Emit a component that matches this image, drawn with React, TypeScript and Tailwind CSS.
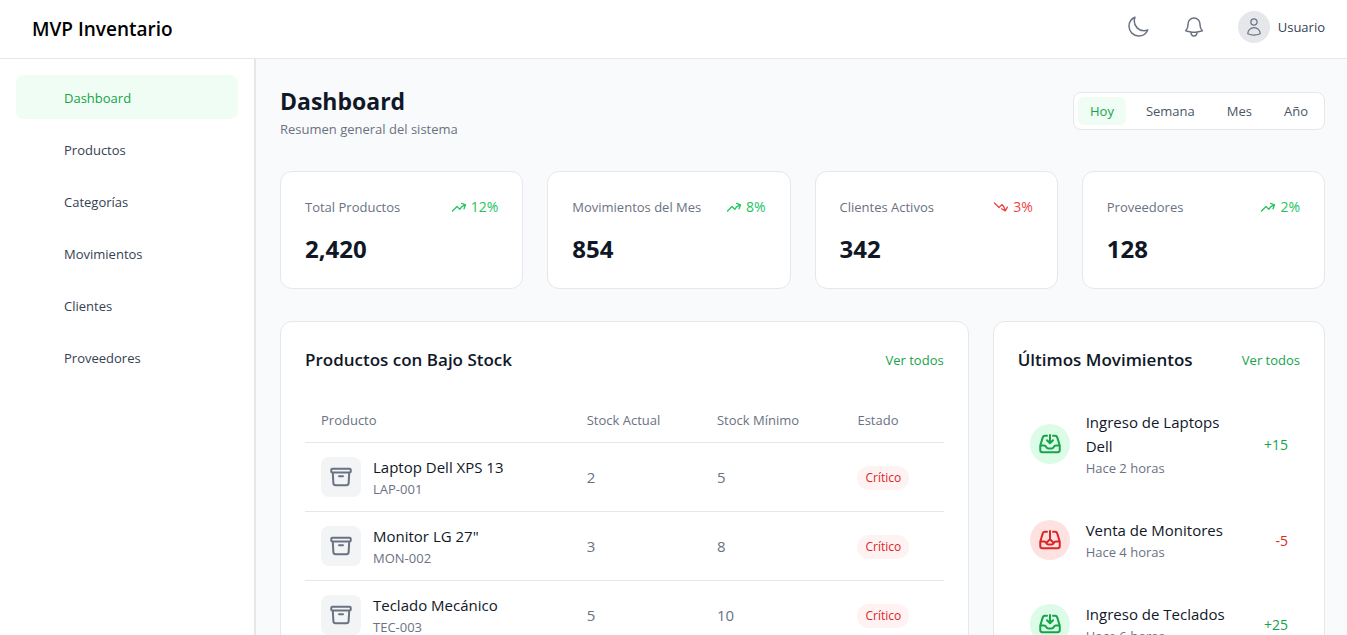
import { useState } from "react";
import {
  HiOutlineMoon,
  HiOutlineBell,
  HiOutlineUser,
} from "react-icons/hi2";

const NAV = ["Dashboard", "Productos", "Categorías", "Movimientos", "Clientes", "Proveedores"];
const RANGES = ["Hoy", "Semana", "Mes", "Año"];

const STATS = [
  { label: "Total Productos", value: "2,420", change: "12%", up: true },
  { label: "Movimientos del Mes", value: "854", change: "8%", up: true },
  { label: "Clientes Activos", value: "342", change: "3%", up: false },
  { label: "Proveedores", value: "128", change: "2%", up: true },
];

const LOW_STOCK = [
  { name: "Laptop Dell XPS 13", code: "LAP-001", stock: 2, min: 5 },
  { name: 'Monitor LG 27"', code: "MON-002", stock: 3, min: 8 },
  { name: "Teclado Mecánico", code: "TEC-003", stock: 5, min: 10 },
];

const MOVEMENTS = [
  { title: "Ingreso de Laptops Dell", time: "Hace 2 horas", amount: "+15", incoming: true },
  { title: "Venta de Monitores", time: "Hace 4 horas", amount: "-5", incoming: false },
  { title: "Ingreso de Teclados", time: "Hace 6 horas", amount: "+25", incoming: true },
];

const TRAY =
  "M9 3.75H6.912a2.25 2.25 0 00-2.15 1.588L2.35 13.177a2.25 2.25 0 00-.1.661V18a2.25 2.25 0 002.25 2.25h15A2.25 2.25 0 0021.75 18v-4.162c0-.224-.034-.447-.1-.661L19.24 5.338a2.25 2.25 0 00-2.15-1.588H15M2.25 13.5h3.86a2.25 2.25 0 012.012 1.244l.256.512a2.25 2.25 0 002.013 1.244h3.218a2.25 2.25 0 002.013-1.244l.256-.512a2.25 2.25 0 012.013-1.244h3.859";
const TRAY_IN = TRAY + "M12 3v8.25m0 0l-3-3m3 3l3-3";
const TRAY_OUT = TRAY + "M12 3v8.25m0 0l-3 3m3-3l3 3";
const TREND_UP =
  "M2.25 18L9 11.25l4.306 4.307a11.95 11.95 0 015.814-5.519l2.74-1.22m0 0l-5.94-2.28m5.94 2.28l-2.28 5.941";
const TREND_DOWN =
  "M2.25 6L9 12.75l4.286-4.286a11.948 11.948 0 014.306 6.43l.776 2.898m0 0l3.182-5.511m-3.182 5.51l-5.511-3.181";
const ARCHIVE =
  "M20.25 7.5l-.625 10.632a2.25 2.25 0 01-2.247 2.118H6.622a2.25 2.25 0 01-2.247-2.118L3.75 7.5M10 11.25h4M3.375 7.5h17.25c.621 0 1.125-.504 1.125-1.125v-1.5c0-.621-.504-1.125-1.125-1.125H3.375c-.621 0-1.125.504-1.125 1.125v1.5c0 .621.504 1.125 1.125 1.125z";

function Icon({ d, className }: { d: string; className: string }) {
  return (
    <svg
      aria-hidden="true"
      viewBox="0 0 24 24"
      fill="none"
      stroke="currentColor"
      strokeWidth={2}
      strokeLinecap="round"
      strokeLinejoin="round"
      className={className}
    >
      <path d={d} />
    </svg>
  );
}

function Header() {
  return (
    <header className="flex h-[59px] shrink-0 items-center justify-between border-b border-gray-200 bg-white pr-[22px] pb-1 pl-8">
      <span className="pt-1 text-[19px] font-semibold text-black">MVP Inventario</span>
      <div className="flex items-center gap-8 text-gray-500">
        <button type="button" aria-label="Cambiar tema">
          <HiOutlineMoon className="size-6" />
        </button>
        <button type="button" aria-label="Notificaciones">
          <HiOutlineBell className="size-6" />
        </button>
        <button type="button" className="flex items-center gap-2">
          <span className="flex size-8 items-center justify-center rounded-full bg-gray-200">
            <HiOutlineUser className="size-5" />
          </span>
          <span className="pt-0.5 text-[13px] text-gray-700">Usuario</span>
        </button>
      </div>
    </header>
  );
}

function Sidebar() {
  return (
    <nav className="flex w-64 shrink-0 flex-col gap-2 border-r-2 border-gray-200 bg-white p-4">
      {NAV.map((item, i) => (
        <a
          key={item}
          href="#"
          className={`flex h-11 items-center rounded-lg pt-1 pl-12 text-[13px] ${
            i === 0 ? "bg-[#f0fdf4] text-[#16a34a]" : "text-gray-700"
          }`}
        >
          {item}
        </a>
      ))}
    </nav>
  );
}

function RangePicker() {
  const [range, setRange] = useState("Hoy");
  return (
    <div className="flex gap-2 rounded-lg border border-gray-200 bg-white p-1">
      {RANGES.map((r) => (
        <button
          key={r}
          type="button"
          onClick={() => setRange(r)}
          className={`h-7 rounded-md px-3 pt-0.5 text-[13px] ${
            r === range ? "bg-[#f0fdf4] text-[#16a34a]" : "text-gray-600"
          }`}
        >
          {r}
        </button>
      ))}
    </div>
  );
}

function PanelHead({ title }: { title: string }) {
  return (
    <div className="mb-6 flex h-7 items-center justify-between">
      <h2 className="text-[17px] font-semibold text-gray-900">{title}</h2>
      <a href="#" className="pt-0.5 text-[13px] text-[#16a34a]">
        Ver todos
      </a>
    </div>
  );
}

export default function App() {
  return (
    <div className="flex h-screen flex-col bg-gray-50 font-['Open_Sans',sans-serif]">
      <Header />
      <div className="flex min-h-0 flex-1">
        <Sidebar />
        <main className="min-w-0 flex-1 overflow-y-auto py-6 pr-[22px] pl-6 [scrollbar-width:none]">
          <div className="mb-8 flex items-center justify-between">
            <div>
              <h1 className="text-[23px] leading-9 font-bold text-gray-900">Dashboard</h1>
              <p className="text-[13px] leading-5 text-gray-500">Resumen general del sistema</p>
            </div>
            <RangePicker />
          </div>

          <div className="mb-8 grid grid-cols-4 gap-6">
            {STATS.map((s) => (
              <section key={s.label} className="rounded-xl border border-gray-200 bg-white p-6">
                <div className="flex items-center justify-between">
                  <h3 className="text-[13px] leading-[22px] text-gray-500">{s.label}</h3>
                  <span
                    className={`flex items-center gap-1 text-sm leading-[22px] ${
                      s.up ? "text-[#22c55e]" : "text-[#ef4444]"
                    }`}
                  >
                    <Icon d={s.up ? TREND_UP : TREND_DOWN} className="size-4" />
                    {s.change}
                  </span>
                </div>
                <p className="mt-4 text-2xl leading-[30px] font-bold text-gray-900">{s.value}</p>
              </section>
            ))}
          </div>

          <div className="grid grid-cols-3 items-start gap-6">
            <section className="col-span-2 rounded-xl border border-gray-200 bg-white p-6">
              <PanelHead title="Productos con Bajo Stock" />
              <table className="w-full table-fixed border-collapse text-left">
                <colgroup>
                  <col className="w-[41.6%]" />
                  <col className="w-[20.4%]" />
                  <col className="w-[22%]" />
                  <col className="w-[16%]" />
                </colgroup>
                <thead>
                  <tr className="border-b border-gray-200 text-[13px] leading-5 text-gray-500">
                    <th className="px-4 py-3 font-normal">Producto</th>
                    <th className="px-4 py-3 font-normal">Stock Actual</th>
                    <th className="px-4 py-3 font-normal">Stock Mínimo</th>
                    <th className="px-4 py-3 font-normal">Estado</th>
                  </tr>
                </thead>
                <tbody>
                  {LOW_STOCK.map((p) => (
                    <tr key={p.code} className="border-b border-gray-200 text-gray-500">
                      <td className="px-4 py-3">
                        <div className="flex items-center gap-3">
                          <span className="flex size-10 shrink-0 items-center justify-center rounded-lg bg-gray-100">
                            <Icon d={ARCHIVE} className="size-6" />
                          </span>
                          <div>
                            <p className="text-[15px] leading-6 text-gray-900">{p.name}</p>
                            <p className="text-[13px] leading-5">{p.code}</p>
                          </div>
                        </div>
                      </td>
                      <td className="px-4 text-[15px]">{p.stock}</td>
                      <td className="px-4 text-[15px]">{p.min}</td>
                      <td className="px-4">
                        <span className="inline-flex h-6 items-center rounded-full bg-[#fef2f2] px-2 text-xs text-[#dc2626]">
                          Crítico
                        </span>
                      </td>
                    </tr>
                  ))}
                </tbody>
              </table>
            </section>

            <section className="rounded-xl border border-gray-200 bg-white p-6">
              <PanelHead title="Últimos Movimientos" />
              <ul className="flex flex-col gap-4">
                {MOVEMENTS.map((m) => (
                  <li key={m.title} className="flex items-center gap-4 p-3">
                    <span
                      className={`flex size-10 shrink-0 items-center justify-center rounded-full ${
                        m.incoming ? "bg-[#dcfce7] text-[#16a34a]" : "bg-[#fee2e2] text-[#dc2626]"
                      }`}
                    >
                      <Icon d={m.incoming ? TRAY_IN : TRAY_OUT} className="size-6" />
                    </span>
                    <div className="flex-1">
                      <p className="text-[15px] leading-6 text-gray-900">{m.title}</p>
                      <p className="text-[13px] leading-5 text-gray-500">{m.time}</p>
                    </div>
                    <span className={`pt-0.5 text-sm ${m.incoming ? "text-[#16a34a]" : "text-[#dc2626]"}`}>
                      {m.amount}
                    </span>
                  </li>
                ))}
              </ul>
            </section>
          </div>
        </main>
      </div>
    </div>
  );
}
